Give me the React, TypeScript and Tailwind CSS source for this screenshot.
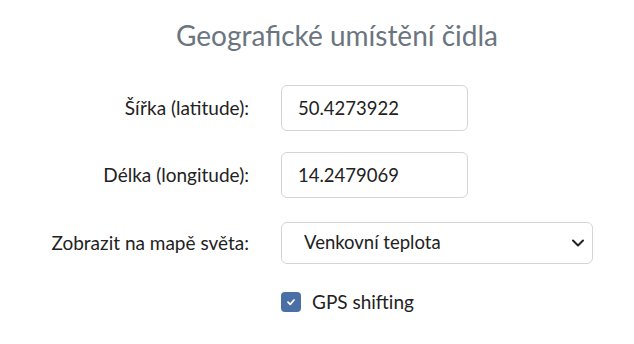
import React, { useState } from 'react';

const App: React.FC = () => {
  const [lat, setLat] = useState('50.4273922');
  const [lng, setLng] = useState('14.2479069');
  const [layer, setLayer] = useState('Venkovní teplota');
  const [gps, setGps] = useState(true);

  return (
    <div className="w-[634px] h-[344px] bg-white text-[#222] font-['Lato','Open_Sans',sans-serif] overflow-hidden">
      <h2 className="pt-[15px] pl-[40px] text-center text-[28px] leading-[40px] text-[#6b7580]">
        Geografické umístění čidla
      </h2>

      <div className="mt-[30px] grid grid-cols-[249px_auto] gap-x-[32px] items-center text-[19px]">
        <label className="text-right">Šířka (latitude):</label>
        <input
          value={lat}
          onChange={(e) => setLat(e.target.value)}
          className="w-[187px] h-[46px] px-[16px] text-[18.5px] rounded-[6px] border border-[#d5d5d5] outline-none"
        />

        <label className="text-right mt-[21px]">Délka (longitude):</label>
        <input
          value={lng}
          onChange={(e) => setLng(e.target.value)}
          className="mt-[21px] w-[187px] h-[46px] px-[16px] text-[18.5px] rounded-[6px] border border-[#d5d5d5] outline-none"
        />

        <label className="text-right mt-[24px]">Zobrazit na mapě světa:</label>
        <div className="relative mt-[24px] w-[312px]">
          <select
            value={layer}
            onChange={(e) => setLayer(e.target.value)}
            className="appearance-none w-full h-[42px] pl-[22px] pr-[40px] text-[18.5px] rounded-[6px] border border-[#d5d5d5] bg-white outline-none"
          >
            <option>Venkovní teplota</option>
            <option>Vnitřní teplota</option>
            <option>Vlhkost</option>
          </select>
          {/* chevron */}
          <svg className="absolute right-[8px] top-[16px] pointer-events-none" width="14" height="10" viewBox="0 0 14 10">
            <path d="M2 2.5 L7 7.5 L12 2.5" fill="none" stroke="#222" strokeWidth="2" strokeLinecap="round" strokeLinejoin="round" />
          </svg>
        </div>

        <div />
        <label className="mt-[24px] flex items-center gap-[11px] cursor-pointer">
          <span
            onClick={() => setGps(!gps)}
            className={`w-[20px] h-[20px] rounded-[4px] flex items-center justify-center ${gps ? 'bg-[#4a6fa5]' : 'border border-[#bbb] bg-white'}`}
          >
            {gps && (
              <svg width="12" height="12" viewBox="0 0 12 12">
                <path d="M3 6.2 L5.2 8.3 L9 4" fill="none" stroke="#fff" strokeWidth="1.8" strokeLinecap="round" strokeLinejoin="round" />
              </svg>
            )}
          </span>
          <span>GPS shifting</span>
        </label>
      </div>
    </div>
  );
};

export default App;
